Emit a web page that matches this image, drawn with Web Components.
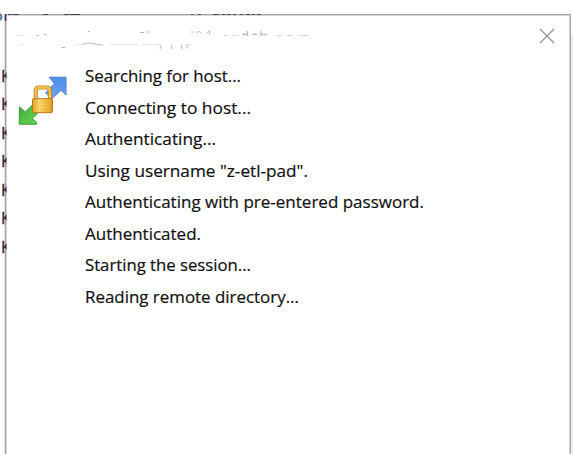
<!DOCTYPE html>
<html lang="en"><head><meta charset="utf-8"><title>Connecting</title>
<style>html,body{margin:0;width:573px;height:454px;overflow:hidden;background:#fff}</style></head><body>
<session-window></session-window>
<script>
class LogLine extends HTMLElement{
 connectedCallback(){
  const r=this.attachShadow({mode:'open'});
  r.innerHTML=`<style>:host{display:block;height:31.5px}svg{display:block;overflow:visible}text{font:16.5px "Open Sans","Noto Sans",sans-serif;fill:#111;stroke:#111;stroke-width:.2px}</style>
  <svg width="400" height="31.5"><text x="0" y="21" lengthAdjust="spacingAndGlyphs" textLength="${this.getAttribute('extent')}"></text></svg>`;
  r.querySelector('text').textContent=this.getAttribute('label');
 }}
customElements.define('log-line',LogLine);

class TransferIcon extends HTMLElement{
 connectedCallback(){
  this.attachShadow({mode:'open'}).innerHTML=`<style>:host{display:block;width:50px;height:50px}svg{display:block}</style>
  <svg width="50" height="50" viewBox="0 0 50 50"><defs>
  <linearGradient id="b" x2="0" y2="1"><stop stop-color="#4d8ee9"/><stop offset="1" stop-color="#6ea5f2"/></linearGradient>
  <linearGradient id="g" x2="1" y2="1"><stop stop-color="#3cab38"/><stop offset="1" stop-color="#67d653"/></linearGradient>
  <linearGradient id="y"><stop stop-color="#dd9d20"/><stop offset=".35" stop-color="#fbd568"/><stop offset="1" stop-color="#d99719"/></linearGradient></defs>
  <path d="M31.2 2.2H48V20L43 15.2 34 23.500 27.500 18 36.500 8.500Z" fill="url(#b)" stroke="#4a80cc" stroke-width="1" stroke-linejoin="round"/>
  <path d="M1.300 31.800V49.200H18.600V47.600L14.300 43.300 22 36 16 28.500 7.300 37Z" fill="url(#g)" stroke="#359a35" stroke-width="1" stroke-linejoin="round"/>
  <path d="M17.700 25V16Q17.700 12.500 21 12.500H28.500Q31.900 12.500 31.900 16V25" fill="none" stroke="#c38626" stroke-width="4.200"/>
  <path d="M17.700 25V16Q17.700 12.500 21 12.500H28.500Q31.900 12.500 31.900 16V25" fill="none" stroke="#f0c050" stroke-width="2.300"/>
  <rect x="14.500" y="23.700" width="20" height="14" rx="1.300" fill="url(#y)" stroke="#b97a16"/>
  <path d="M16 25.500H33M16 29H33M16 32.500H33" stroke="#ffe28b" opacity=".3"/></svg>`;
 }}
customElements.define('transfer-icon',TransferIcon);

class CoveredTitle extends HTMLElement{
 connectedCallback(){
  this.attachShadow({mode:'open'}).innerHTML=`<style>:host{display:block;width:330px;height:34px}svg{display:block}</style>
  <svg width="330" height="34" fill="none" stroke="#a2a2a8">
  <path d="M30 20.500h3M38 19.500h2M82 16.500h2" opacity=".75"/><path d="M12 20.500h7M13 29.500h5M69 29.500h9M104 29.500h28M136 29.500h18" opacity=".28"/>
  <path d="M77 29q5-2 10-.5t10 1.500" opacity=".7"/><path d="M56 32.500h3" opacity=".8"/>
  <path d="M134 17.500h4M140 17h3" opacity=".8"/>
  <path d="M154.500 30v4M165.500 30v4M175.500 30v4M181 29.500v4" opacity=".55" stroke-width="1.500"/><path d="M181 29.500h4" opacity=".4"/>
  <path d="M186 16v2M190 18q3.500-3 6 .5M201 18l2.500-2v3" opacity=".7"/>
  <path d="M218 20.500h4M226 20.500h7M271 20.500h6M281 20.500h6M292 20.500h11" opacity=".4"/>
  <path d="M236 20q3-2 5 0M241.500 16v5M246 20q3-2 5 0M255 16v5M256 19.500q3-1 5 1" stroke-width="1.400" opacity=".7"/>
  </svg>`;
 }}
customElements.define('covered-title',CoveredTitle);

class SessionWindow extends HTMLElement{
 connectedCallback(){
  const lines=[['Searching for host...',156],['Connecting to host...',166],['Authenticating...',131],['Using username "z-etl-pad".',223],['Authenticating with pre-entered password.',339],['Authenticated.',116],['Starting the session...',166],['Reading remote directory...',214]];
  this.attachShadow({mode:'open'}).innerHTML=`<style>
  :host{display:block;position:relative;width:573px;height:454px;overflow:hidden;background:#fff;font-family:"Open Sans","Noto Sans",sans-serif;color:#161616}
  .behind{position:absolute;inset:0 auto auto 0;width:573px;height:454px}
  .k{position:absolute;left:1px;top:61.500px;width:12px;font-size:16px;line-height:28.500px;color:#35143d;clip-path:inset(0 6.500px 0 0)}
  .k div{height:28.500px;-webkit-text-stroke:.3px #35143d}
  .dialog{position:absolute;left:5px;top:14px;width:566px;height:460px;box-sizing:border-box;border:1px solid #a5a5a5;background:#fff;box-shadow:inset 0 0 0 1px #d4d4d4,-1px 0 #e4e4e4}
  header{height:44px;display:flex;justify-content:space-between;padding:0 14px 0 0}
  header svg{margin-top:12px}main{display:grid;grid-template-columns:79px 1fr}
  transfer-icon{margin:16px 0 0 12px}.log{margin-top:2px}
  </style>
  <svg class="behind"><path d="M572 33v421" stroke="#ededed" stroke-width="2"/><path d="M0 14q3 3 0 6" fill="none" stroke="#507b99" stroke-width="2"/></svg>
  <div class="dialog"><header><covered-title></covered-title><svg width="18" height="18"><path d="M2 2L16 16M16 2L2 16" stroke="#929292" stroke-width="1.300"/></svg></header>
  <main><transfer-icon></transfer-icon><div class="log">${lines.map(l=>`<log-line label='${l[0]}' extent="${l[1]}"></log-line>`).join('')}</div></main></div>
  <div class="k">${'<div>K</div>'.repeat(7)}</div>
  <svg class="behind"><path d="M5.500 14v7" stroke="#42233d" stroke-width="1.500"/><path d="M8 14.500h4M13 14.500h6M43 14.500h5M64 14.500h5M70 14.500h10M191 14.500h2M198 14.500h3M213 14.500h6M222 14.500h3M227 14.500h4M233 14.500h3M240 14.500h3M246 14.500h4M252 14.500h3M257 14.500h4" stroke="#353040" opacity=".8"/></svg>`;
 }}
customElements.define('session-window',SessionWindow);
</script></body></html>
